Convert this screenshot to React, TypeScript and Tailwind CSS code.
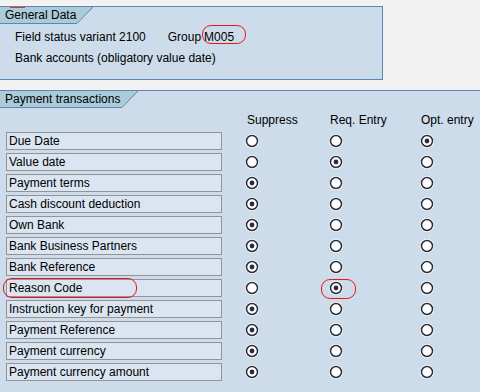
import React from "react";

type Choice = 0 | 1 | 2;

const rows: { label: string; pick: Choice }[] = [
    { label: "Due Date", pick: 2 },
    { label: "Value date", pick: 1 },
    { label: "Payment terms", pick: 0 },
    { label: "Cash discount deduction", pick: 0 },
    { label: "Own Bank", pick: 0 },
    { label: "Bank Business Partners", pick: 0 },
    { label: "Bank Reference", pick: 0 },
    { label: "Reason Code", pick: 1 },
    { label: "Instruction key for payment", pick: 0 },
    { label: "Payment Reference", pick: 0 },
    { label: "Payment currency", pick: 0 },
    { label: "Payment currency amount", pick: 0 },
];

const Radio = ({ on }: { on: boolean }) => (
    <svg width="14" height="14" viewBox="0 0 14 14">
        <circle cx="7" cy="7" r="6.9" fill="#ffffff" />
        <circle cx="7" cy="7" r="5.5" fill="#ffffff" stroke="#2c2c3e" strokeWidth="1.5" />
        {on && <circle cx="7" cy="7" r="2.4" fill="#2c2c3e" />}
    </svg>
);

const Tab = ({ title, width }: { title: string; width: number }) => (
    <div className="flex h-[17px]">
        <div
            className="h-[17px] bg-[#abcbd9] border-b border-[#5a87b5] pl-[5px] leading-[16px]"
            style={{ width }}
        >
            {title}
        </div>
        <svg width="16" height="17" viewBox="0 0 16 17">
            <polygon points="0,0 16,0 0,16.5" fill="#abcbd9" />
            <line x1="0" y1="16.5" x2="16" y2="0" stroke="#5a87b5" strokeWidth="1" />
        </svg>
    </div>
);

export default function App() {
    return (
        <div className="w-[480px] h-[392px] overflow-hidden bg-[#f2f2f2] text-[12px] text-black font-['Liberation_Sans',Arial,sans-serif] pt-[6px]">
            {/* General data */}
            <div className="relative w-[383px] h-[74px] bg-[#cddcea] border-t border-r border-b border-[#5a87b5]">
                <Tab title="General Data" width={77} />
                <div className="absolute left-[10px] top-[0px] w-[15px] h-[1px] bg-[#e53030]" />
                <div className="flex items-center pl-[15px] mt-[4px] h-[18px]">
                    <span>Field status variant 2100</span>
                    <span className="ml-[22px]">Group</span>
                    <span className="ml-[3px]">M005</span>
                </div>
                <div className="pl-[15px] mt-[3px] h-[18px] leading-[18px]">
                    Bank accounts (obligatory value date)
                </div>
                <div className="absolute left-[202px] top-[18px] w-[44px] h-[19px] rounded-[9px] border border-[#e8161c]" />
            </div>

            {/* Payment transactions */}
            <div className="relative mt-[10px] h-[310px] bg-[#cddcea] border-t border-[#5a87b5]">
                <Tab title="Payment transactions" width={122} />
                <div className="flex h-[24px] items-center">
                    <span className="ml-[247px] w-[83px]">Suppress</span>
                    <span className="w-[91px]">Req. Entry</span>
                    <span className="whitespace-nowrap">Opt. entry</span>
                </div>
                <div className="flex flex-col gap-[3px]">
                    {rows.map((r) => (
                        <div key={r.label} className="flex items-center h-[18px]">
                            <div className="ml-[6px] w-[216px] h-[18px] bg-[#dae5f1] border border-[#939393] pl-[2px] leading-[16px]">
                                {r.label}
                            </div>
                            <div className="ml-[23px] flex">
                                <div className="w-[84px]">
                                    <Radio on={r.pick === 0} />
                                </div>
                                <div className="w-[91px]">
                                    <Radio on={r.pick === 1} />
                                </div>
                                <div>
                                    <Radio on={r.pick === 2} />
                                </div>
                            </div>
                        </div>
                    ))}
                </div>
                <div className="absolute left-[3px] top-[187px] w-[134px] h-[20px] rounded-[9px] border border-[#e8161c]" />
                <div className="absolute left-[321px] top-[188px] w-[35px] h-[20px] rounded-[9px] border border-[#e8161c]" />
            </div>
        </div>
    );
}
